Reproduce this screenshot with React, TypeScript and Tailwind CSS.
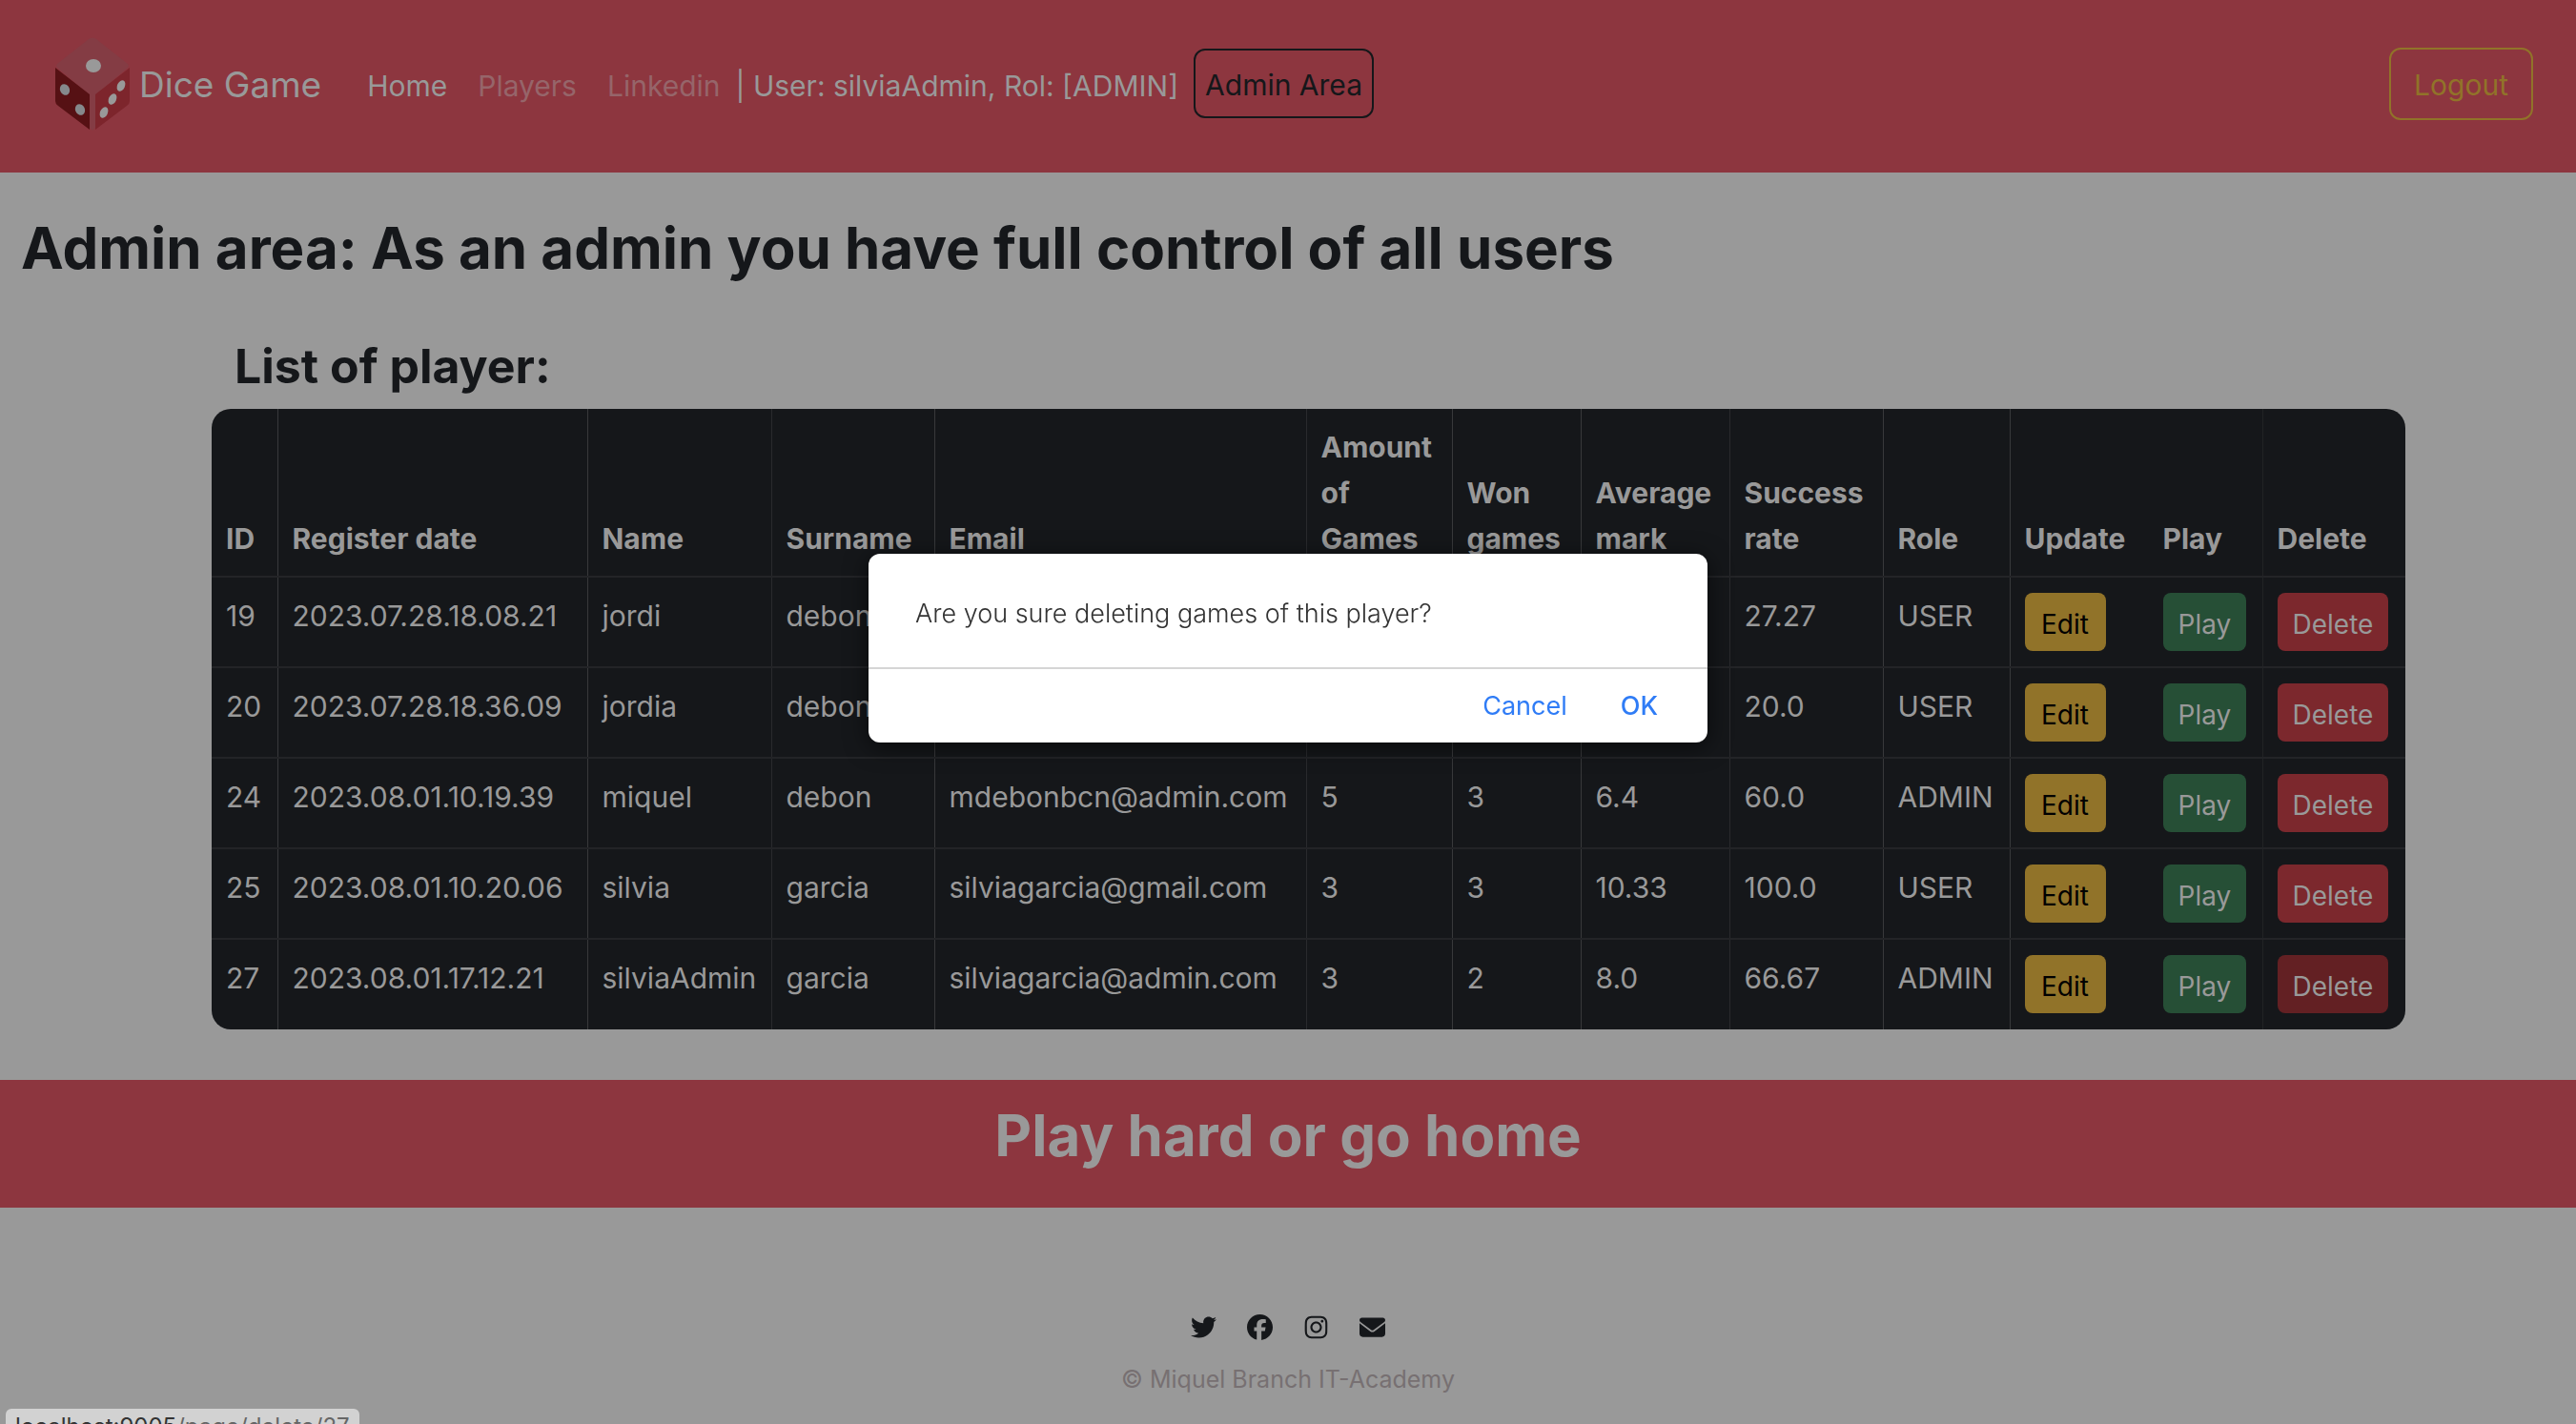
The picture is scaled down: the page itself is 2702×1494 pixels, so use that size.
import React from "react";
import { FaTwitter, FaFacebook, FaInstagram, FaEnvelope } from "react-icons/fa6";

type Player = {
  id: number;
  date: string;
  name: string;
  surname: string;
  email?: string;
  games?: string;
  won?: string;
  mark?: string;
  rate: string;
  role: string;
};

const players: Player[] = [
  { id: 19, date: "2023.07.28.18.08.21", name: "jordi", surname: "debon", rate: "27.27", role: "USER" },
  { id: 20, date: "2023.07.28.18.36.09", name: "jordia", surname: "debon", rate: "20.0", role: "USER" },
  { id: 24, date: "2023.08.01.10.19.39", name: "miquel", surname: "debon", email: "mdebonbcn@admin.com", games: "5", won: "3", mark: "6.4", rate: "60.0", role: "ADMIN" },
  { id: 25, date: "2023.08.01.10.20.06", name: "silvia", surname: "garcia", email: "silviagarcia@gmail.com", games: "3", won: "3", mark: "10.33", rate: "100.0", role: "USER" },
  { id: 27, date: "2023.08.01.17.12.21", name: "silviaAdmin", surname: "garcia", email: "silviagarcia@admin.com", games: "3", won: "2", mark: "8.0", rate: "66.67", role: "ADMIN" },
];

const columns = [
  { label: "ID", width: "w-[69px]", line: "border-[#38393b]" },
  { label: "Register date", width: "w-[325px]", line: "border-[#38393b]" },
  { label: "Name", width: "w-[193px]", line: "border-[#292a2d]" },
  { label: "Surname", width: "w-[171px]", line: "border-[#38393b]" },
  { label: "Email", width: "w-[390px]", line: "border-[#292a2d]" },
  { label: "Amount of Games", width: "w-[153px]", line: "border-[#38393b]" },
  { label: "Won games", width: "w-[135px]", line: "border-[#38393b]" },
  { label: "Average mark", width: "w-[156px]", line: "border-[#292a2d]" },
  { label: "Success rate", width: "w-[161px]", line: "border-[#38393b]" },
  { label: "Role", width: "w-[133px]", line: "border-[#38393b]" },
  { label: "Update", width: "w-[145px]", line: "border-[#15171a]" },
  { label: "Play", width: "w-[120px]", line: "border-[#212325]" },
  { label: "Delete", width: "w-[150px]", line: "border-[#15171a]" },
];

function Die() {
  return (
    <svg viewBox="0 0 78 100" className="h-[100px] w-[78px]" aria-hidden="true">
      <path d="M35 3 Q39 0 43 3 L76 29 Q78 31 76 33 L42 62 H36 L2 33 Q0 31 2 29Z" fill="#843c44" />
      <path d="M36 60 H42 V96 L39 99 L36 96Z" fill="#843c44" />
      <path d="M0 33 L36 61 V98 L3 73 Q0 71 0 68Z" fill="#561114" />
      <path d="M78 33 L42 61 V98 L75 73 Q78 71 78 68Z" fill="#7d252c" />
      <ellipse cx="40" cy="31" rx="8" ry="7" fill="#999" />
      <ellipse cx="10" cy="56" rx="5" ry="6" transform="rotate(-25 10 56)" fill="#85898c" />
      <ellipse cx="26" cy="77" rx="5" ry="6" transform="rotate(-25 26 77)" fill="#85898c" />
      <ellipse cx="69" cy="52" rx="4" ry="6" transform="rotate(25 69 52)" fill="#999" />
      <ellipse cx="60" cy="66" rx="4" ry="6" transform="rotate(25 60 66)" fill="#999" />
      <ellipse cx="51" cy="80" rx="4" ry="6" transform="rotate(25 51 80)" fill="#999" />
    </svg>
  );
}

function Navbar() {
  return (
    <header className="flex h-[181px] items-center bg-[#8d363f] pr-[45px] pb-1.5 pl-[58px] text-3xl text-[#999]">
      <a href="#" className="flex items-center gap-2.5 text-[37px]">
        <Die />
        <span className="pt-1">Dice Game</span>
      </a>
      <nav className="ml-12 flex items-center gap-8 pt-1">
        <a href="#">Home</a>
        <a href="#" className="text-[#96656a]">Players</a>
        <a href="#" className="text-[#96656a]">Linkedin</a>
      </nav>
      <span className="ml-4 pt-1">| User: silviaAdmin, Rol: [ADMIN]</span>
      <button type="button" className="ml-4 h-[73px] rounded-xl border-2 border-[#15171a] px-2.5 pt-0.5 text-[#15171a]">Admin Area</button>
      <button type="button" className="ml-auto h-[76px] rounded-xl border-2 border-[#917329] px-6 pt-0.5 text-[#917329]">Logout</button>
    </header>
  );
}

const action = "block h-[61px] min-w-[85px] rounded-lg px-4 pt-1 text-[28px]";

function PlayersTable() {
  return (
    <div className="overflow-hidden rounded-[20px] bg-[#15171a]">
      <table className="w-full table-fixed border-collapse text-left text-[30px] leading-[48px] text-[#999]">
        <colgroup>
          {columns.map((c) => (
            <col key={c.label} className={c.width} />
          ))}
        </colgroup>
        <thead>
          <tr className="h-[175px] border-b-2 border-[#232427]">
            {columns.map((c) => (
              <th key={c.label} scope="col" className={`border-r px-[15px] pt-4 pb-[15px] align-bottom font-bold ${c.line}`}>
                {c.label}
              </th>
            ))}
          </tr>
        </thead>
        <tbody>
          {players.map((p, row) => {
            const cells: React.ReactNode[] = [
              p.id, p.date, p.name, p.surname, p.email, p.games, p.won, p.mark, p.rate, p.role,
              <button type="button" className={`${action} bg-[#917329] text-black`}>Edit</button>,
              <button type="button" className={`${action} bg-[#264f36]`}>Play</button>,
              <button type="button" className={`${action} ${row === 4 ? "bg-[#632023]" : "bg-[#7c282d]"}`}>Delete</button>,
            ];
            return (
              <tr key={p.id} className="h-[95px] border-b-2 border-[#232427] last:border-b-0">
                {cells.map((cell, i) => (
                  <td key={i} className={`border-r px-[15px] py-4 align-top ${columns[i].line}`}>{cell}</td>
                ))}
              </tr>
            );
          })}
        </tbody>
      </table>
    </div>
  );
}

function ConfirmDialog() {
  return (
    <div className="fixed inset-x-0 top-[581px] flex justify-center">
      <div role="alertdialog" aria-labelledby="confirm-text" className="w-[880px] rounded-xl bg-white text-[27px] shadow-[0_4px_24px_rgba(0,0,0,0.6)]">
        <p id="confirm-text" className="flex h-[121px] items-center border-b-2 border-[#d5d5d5] px-[49px] pt-2 font-light text-[#333]">
          Are you sure deleting games of this player?
        </p>
        <div className="flex h-[77px] items-center justify-end gap-14 pt-0.5 pr-13 text-[#2f7cf6]">
          <button type="button">Cancel</button>
          <button type="button" className="font-medium">OK</button>
        </div>
      </div>
    </div>
  );
}

export default function App() {
  return (
    <div className="flex h-screen flex-col overflow-hidden bg-[#999] font-['Inter',sans-serif] text-[#15171a]">
      <Navbar />
      <main>
        <h1 className="mt-[46px] px-[22px] text-[60px] leading-[67px] font-bold whitespace-nowrap">
          Admin area: As an admin you have full control of all users
        </h1>
        <section className="mt-[61px] mb-[53px] pr-[179px] pl-[222px]">
          <h2 className="mb-4 px-6 text-[50px] leading-[58px] font-bold">List of player:</h2>
          <PlayersTable />
        </section>
        <section className="flex h-[134px] justify-center bg-[#8d363f] pt-[25px] text-[60px] leading-[67px] font-bold text-[#999]">
          <h2>Play hard or go home</h2>
        </section>
      </main>
      <footer className="mt-[112px] flex flex-col items-center">
        <div className="flex gap-8 text-[27px]">
          <a href="#" aria-label="Twitter"><FaTwitter /></a>
          <a href="#" aria-label="Facebook"><FaFacebook /></a>
          <a href="#" aria-label="Instagram"><FaInstagram /></a>
          <a href="#" aria-label="Email"><FaEnvelope /></a>
        </div>
        <p className="mt-[22px] text-[25px] leading-[38px] text-[#777072]">© Miquel Branch IT-Academy</p>
      </footer>
      <ConfirmDialog />
      <div className="fixed top-[1478px] left-1.5 h-10 rounded-md bg-[#d2d2d2] px-2.5 pt-0.5 text-[24px] leading-[34px] text-[#666]">
        <span className="text-[#333]">localhost:9005</span>/page/delete/27
      </div>
    </div>
  );
}
